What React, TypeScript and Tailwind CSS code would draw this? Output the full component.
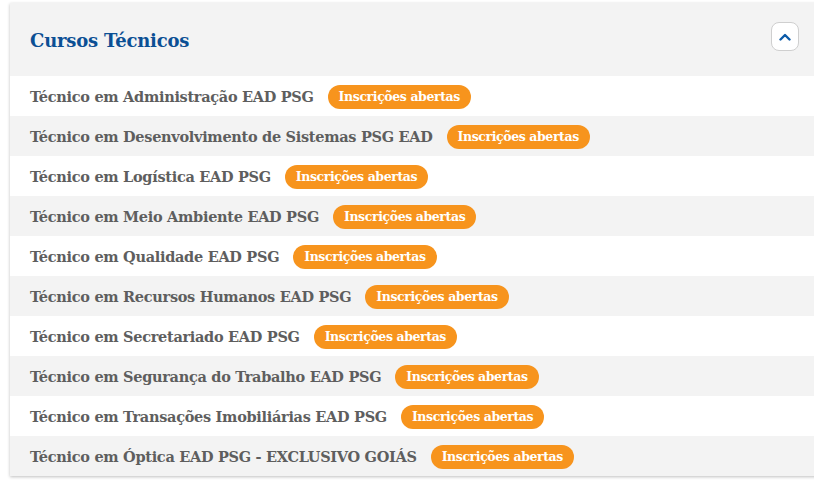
import React from "react";

const courses = [
  "Técnico em Administração EAD PSG",
  "Técnico em Desenvolvimento de Sistemas PSG EAD",
  "Técnico em Logística EAD PSG",
  "Técnico em Meio Ambiente EAD PSG",
  "Técnico em Qualidade EAD PSG",
  "Técnico em Recursos Humanos EAD PSG",
  "Técnico em Secretariado EAD PSG",
  "Técnico em Segurança do Trabalho EAD PSG",
  "Técnico em Transações Imobiliárias EAD PSG",
  "Técnico em Óptica EAD PSG - EXCLUSIVO GOIÁS",
];

export default function App() {
  return (
    <div className="w-[814px] h-[481px] overflow-hidden bg-white pt-[3px] pl-[10px]" style={{ fontFamily: '"DejaVu Serif", serif' }}>
      <div className="w-[820px] bg-white shadow-[0_1px_3px_rgba(0,0,0,0.25)]">
        <div className="h-[73px] bg-[#f3f3f3] flex items-start pl-[20px] pr-[15px]">
          <h2 className="mt-[26px] text-[18px] leading-[24px] font-semibold text-[#0b4f94] tracking-[-0.2px] flex-1">Cursos Técnicos</h2>
          <div className="mt-[19px] w-[28px] h-[29px] rounded-[8px] border border-[#cfcfcf] bg-white flex items-center justify-center mr-[16px]">
            <svg width="12" height="8" viewBox="0 0 12 8" fill="none">
              <path d="M1.5 6.5 L6 2 L10.5 6.5" stroke="#0b5aa8" strokeWidth="2.4" strokeLinecap="round" strokeLinejoin="round" />
            </svg>
          </div>
        </div>
        {courses.map((c, i) => (
          <div key={c} className={`h-[40px] flex items-center pl-[20px] pt-[2px] ${i % 2 === 0 ? "bg-white" : "bg-[#f3f3f3]"}`}>
            <span className="text-[14.5px] font-semibold text-[#5e5e5e] tracking-[-0.3px]">{c}</span>
            <span className="ml-[14px] h-[24px] px-[11px] rounded-full bg-[#f7941d] text-white text-[12.5px] font-bold flex items-center tracking-[-0.4px]">Inscrições abertas</span>
          </div>
        ))}
      </div>
    </div>
  );
}
